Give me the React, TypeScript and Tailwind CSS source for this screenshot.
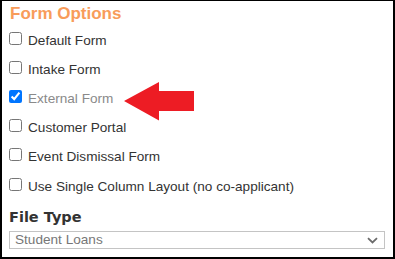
import React from "react";

const options = [
  { label: "Default Form", checked: false },
  { label: "Intake Form", checked: false },
  { label: "External Form", checked: true, muted: true },
  { label: "Customer Portal", checked: false },
  { label: "Event Dismissal Form", checked: false },
  { label: "Use Single Column Layout (no co-applicant)", checked: false },
];

export default function App() {
  return (
    <div className="relative w-[395px] h-[259px] bg-white border-black border-t border-l-2 border-r-2 border-b-2 pl-[7px] pr-[8px] font-['Liberation_Sans',Arial,sans-serif] overflow-hidden">
      {/* Section title */}
      <div className="pt-[2px] mb-[5px] ml-[1px] text-[17px] leading-[21px] font-bold text-[#f89c5a]">
        Form Options
      </div>

      {/* Checkbox list */}
      {options.map((opt, i) => (
        <div
          key={opt.label}
          className={
            "h-[29px] text-[13.6px] leading-[16px] whitespace-nowrap " +
            (i === options.length - 1 ? "mt-[1px] " : "") +
            (opt.muted ? "text-[#8a8a8a]" : "text-[#333333]")
          }
        >
          <input
            type="checkbox"
            defaultChecked={opt.checked}
            className="w-[13px] h-[13px] my-[3px] ml-0 mr-[6px] align-baseline"
          />
          <span>{opt.label}</span>
        </div>
      ))}

      {/* File type */}
      <div className="mt-[4px] text-[14.5px] leading-[18px] font-bold text-[#333333] font-['DejaVu_Sans',Verdana,sans-serif]">
        File Type
      </div>
      <div className="mt-[5px] h-[18px] w-full border border-[#c4c4c4] flex items-center justify-between pl-[5px] pr-[6px]">
        <span className="text-[13.6px] leading-[14px] text-[#777777]">Student Loans</span>
        <svg width="11" height="7" viewBox="0 0 11 7" className="mt-[1px]">
          <path d="M1 1.2 L5.5 5.5 L10 1.2" fill="none" stroke="#6b6b6b" strokeWidth="1.8" />
        </svg>
      </div>

      {/* Red callout arrow */}
      <svg
        className="absolute left-[120px] top-[80px]"
        width="74"
        height="41"
        viewBox="120 80 74 41"
      >
        <polygon
          points="122,100 157,81 157,90 192,90 192,110 157,110 157,119.5"
          fill="#ed1c24"
        />
      </svg>
    </div>
  );
}
